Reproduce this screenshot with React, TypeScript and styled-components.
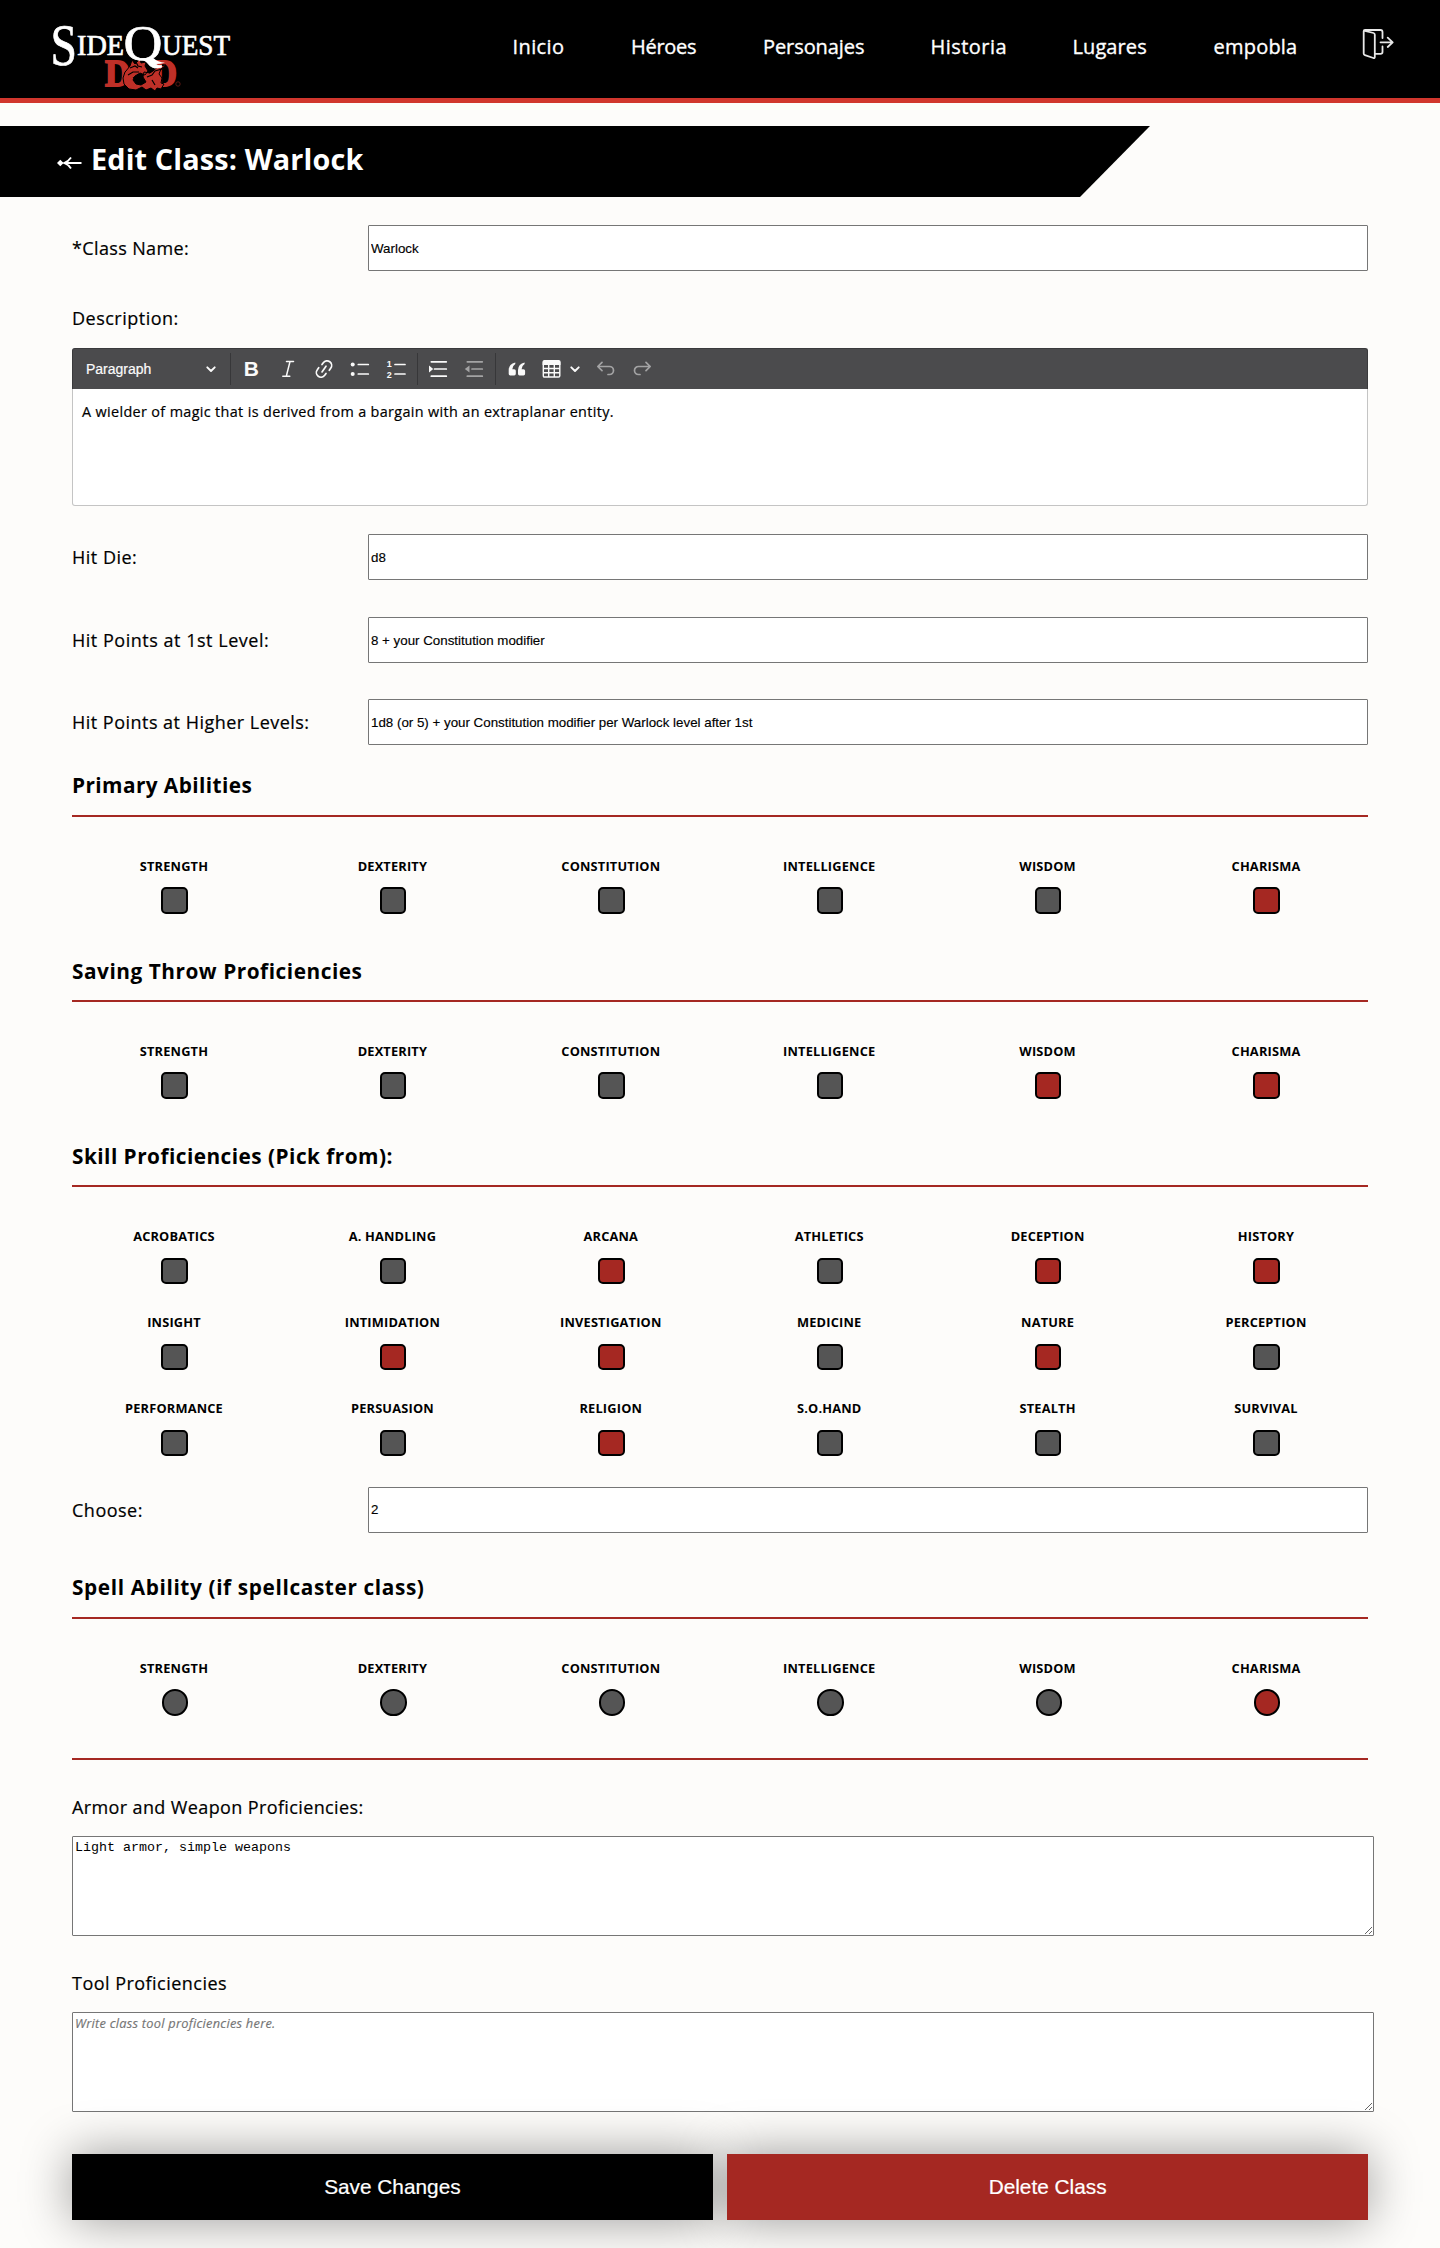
import React from "react";
import styled, { createGlobalStyle, css } from "styled-components";

const lucida = `"Lucida Grande", "Open Sans", "Noto Sans", sans-serif`;
const arial = `"Liberation Sans", Arial, sans-serif`;
const crimson = "#a52822";

const GlobalStyle = createGlobalStyle`
  * { box-sizing: border-box; }
  html, body { margin: 0; }
  body { background: #fdfcfa; color: #000; font-family: ${lucida}; }
  #root { overflow: hidden; }
`;

const Page = styled.div`
  height: 2248px;
  overflow: hidden;
`;

const Header = styled.header`
  display: flex;
  justify-content: space-between;
  align-items: flex-start;
  height: 103px;
  padding: 0 46px 0 40px;
  background: #000;
  border-bottom: 5px solid #d1362d;
`;

const LogoLink = styled.a`
  display: block;
  height: 98px;
`;

const Nav = styled.nav`
  display: flex;
  align-items: flex-start;
  padding-top: 28px;
`;

const NavLink = styled.a<{ $width: number; $spacing: number }>`
  width: ${(p) => p.$width}px;
  margin-top: 5px;
  color: #fff;
  font-size: 20px;
  font-weight: 500;
  line-height: 28px;
  letter-spacing: ${(p) => p.$spacing}px;
  white-space: nowrap;
  -webkit-text-stroke: 0.35px currentColor;
`;

const Banner = styled.div`
  display: flex;
  align-items: center;
  width: 1150px;
  height: 71px;
  margin-top: 23px;
  padding: 0 0 5px 57px;
  gap: 9px;
  background: #000;
  color: #fff;
  clip-path: polygon(0 0, 100% 0, calc(100% - 70px) 100%, 0 100%);
`;

const BannerTitle = styled.h1`
  margin: 0;
  font-size: 28.8px;
  font-weight: 700;
  line-height: 40px;
  letter-spacing: 0.15px;
`;

const BackArrow = styled.svg`
  margin-top: 8px;
`;

const Form = styled.form`
  display: flex;
  flex-direction: column;
  width: 1296px;
  margin: 28px auto 0;
`;

const FieldRow = styled.div<{ $gap: number }>`
  display: grid;
  grid-template-columns: 296px 1fr;
  align-items: center;
  height: 46px;
  margin-top: ${(p) => p.$gap}px;
`;

const Label = styled.label<{ $spacing?: number }>`
  font-size: 18px;
  line-height: 24px;
  letter-spacing: ${(p) => p.$spacing ?? 0.5}px;
  -webkit-text-stroke: 0.2px currentColor;
`;

const BlockLabel = styled(Label)<{ $top: number; $bottom: number }>`
  margin-top: ${(p) => p.$top}px;
  margin-bottom: ${(p) => p.$bottom}px;
`;

const TextInput = styled.input`
  width: 100%;
  height: 46px;
  padding: 1px 2px;
  border: 1px solid #767676;
  border-radius: 1px;
  background: #fff;
  color: #000;
  font: 13.333px ${arial};
  -webkit-text-stroke: 0.15px currentColor;
`;

const TextArea = styled.textarea`
  width: calc(100% + 6px);
  height: 100px;
  padding: 3px 2px 2px;
  border: 1px solid #767676;
  border-radius: 1px;
  background: #fff;
  color: #000;
  font: 13.333px "Liberation Mono", "Courier New", monospace;
  resize: both;
  &::placeholder {
    color: #757575;
    font: italic 12.8px/14px ${lucida};
    letter-spacing: 0.26px;
    -webkit-text-stroke: 0.15px currentColor;
  }
`;

const Editor = styled.div`
  height: 158px;
  border: 1px solid #c4c4c4;
  border-top: 0;
  border-radius: 3px;
  background: #fff;
`;

const Toolbar = styled.div`
  display: flex;
  align-items: center;
  height: 41px;
  margin: 0 -1px;
  border: 1px solid #3a3a3c;
  border-bottom: 0;
  border-radius: 3px 3px 0 0;
  background: #4b4b4d;
  color: #fafafa;
`;

const HeadingSelect = styled.button`
  display: flex;
  align-items: center;
  justify-content: space-between;
  width: 154px;
  height: 32px;
  padding: 0 11px 0 13px;
  border: 0;
  background: none;
  color: inherit;
  font: 14px ${arial};
  -webkit-text-stroke: 0.2px currentColor;
`;

const ToolSeparator = styled.span`
  width: 1px;
  height: 32px;
  margin: 0 2.6px 0 2.8px;
  background: #373739;
`;

const ToolButton = styled.button<{ $width?: number; $muted?: boolean }>`
  display: flex;
  align-items: center;
  justify-content: center;
  gap: 9px;
  width: ${(p) => p.$width ?? 36.1}px;
  height: 36px;
  padding: 0;
  border: 0;
  background: none;
  color: inherit;
  opacity: ${(p) => (p.$muted ? 0.5 : 1)};
`;

const BoldGlyph = styled.span`
  font: 700 21px/22px ${arial};
`;

const EditorContent = styled.p`
  margin: 0;
  padding: 12px 9px;
  font-size: 14.4px;
  line-height: 22px;
  letter-spacing: 0.35px;
  -webkit-text-stroke: 0.2px currentColor;
`;

const SectionHeading = styled.h2<{ $gap: number; $spacing: number; $line?: number }>`
  height: 47px;
  margin: ${(p) => p.$gap}px 0 0;
  border-bottom: 2px solid ${crimson};
  font-size: 20.8px;
  font-weight: 700;
  line-height: ${(p) => p.$line ?? 30}px;
  letter-spacing: ${(p) => p.$spacing}px;
`;

const Divider = styled.hr`
  width: 100%;
  height: 2px;
  margin: 42.2px 0 0;
  border: 0;
  background: ${crimson};
`;

const ChoiceGrid = styled.div`
  display: grid;
  grid-template-columns: repeat(6, 1fr);
  column-gap: 14.4px;
  row-gap: 29px;
  padding-top: 40px;
`;

const Choice = styled.label<{ $gap: number }>`
  display: flex;
  flex-direction: column;
  align-items: center;
  gap: ${(p) => p.$gap}px;
  font-size: 12.8px;
  font-weight: 700;
  line-height: 18px;
  letter-spacing: 0.18px;
`;

const Mark = styled.input<{ $round: boolean }>`
  appearance: none;
  width: 26.4px;
  height: 26.4px;
  margin: 0 0 0 ${(p) => (p.$round ? 2.4 : 1.2)}px;
  border: 2px solid #000;
  background: #555;
  ${(p) =>
    p.$round
      ? css`
          border-radius: 50%;
        `
      : css`
          border-radius: 5px;
        `}
  &:checked {
    background: ${crimson};
  }
`;

const Actions = styled.div`
  display: grid;
  grid-template-columns: 1fr 1fr;
  gap: 14.4px;
  margin-top: 42px;
`;

const ActionButton = styled.button<{ $danger?: boolean }>`
  height: 66px;
  padding: 0;
  border: 0;
  background: ${(p) => (p.$danger ? crimson : "#000")};
  color: #fff;
  font: 20.8px ${arial};
  -webkit-text-stroke: 0.2px currentColor;
  box-shadow: 0 0 50px rgba(0, 0, 0, 0.4);
`;

const Logo = () => (
  <svg width="204" height="98" viewBox="40 0 204 98" fontFamily='"Liberation Serif", serif' fill="#fff" stroke="#fff" strokeWidth="0.7">
    <g fill="#bf3028" stroke="#bf3028" strokeWidth="1.8" fontWeight="700">
      <text x="105" y="85.500" fontSize="38" textLength="25" lengthAdjust="spacingAndGlyphs">D</text>
      <text x="152" y="85.500" fontSize="38" textLength="25" lengthAdjust="spacingAndGlyphs">D</text>
    </g>
    <g>
      <path d="M126 71l4-5 2-6 3 4 5-5 1 4 5-1-1 4 3 5-3 4-5-2-5 3-2 4 3 4 5 1 5-3-3-5 1-5 6 1 4-3 5-4 7-1-5 4-2 5 3 4-1 5 3 1-3 5-4-1-2 3-4-3-5 2-4-3-6 3-7-1-5-5-1-6 2-6z" fill="#bf3028" stroke="#000" strokeWidth="1" />
      <path d="M130 68l5-2 3 2M136 62l2 4 4 1M128 75l5-3 6 0M133 78l4-2M147 77l5-2 3-4 7-2M152 80l3 5M149 73l5-3" fill="none" stroke="#000" strokeWidth="1.200" />
    </g>
    <circle cx="178" cy="84" r="2.200" fill="none" stroke="#6e1d18" strokeWidth="0.800" />
    <text x="50.500" y="65" fontSize="60" textLength="26.500" lengthAdjust="spacingAndGlyphs">S</text>
    <text x="77" y="55" fontSize="30" textLength="47" lengthAdjust="spacingAndGlyphs">IDE</text>
    <text x="123.500" y="59.500" fontSize="51" textLength="39" lengthAdjust="spacingAndGlyphs">Q</text>
    <path d="M141 58.500q6 5 13 5.500 6 .3 11-1.200-7-.3-12-5z" stroke="none" />
    <text x="162" y="55" fontSize="30" textLength="68" lengthAdjust="spacingAndGlyphs">UEST</text>
  </svg>
);

const ExitIcon = () => (
  <svg width="32" height="32" viewBox="0 0 32 32" fill="none" stroke="#e8e8e8" strokeWidth="1.8" strokeLinejoin="round" strokeLinecap="round">
    <path d="M2 2.600 11.500 5q1.300.4 1.300 1.800V29q0 1.300-1.400 1L2.900 27.200Q1.700 26.800 1.700 25.500V3.200Q1.700 2 3 2H18.500Q20.500 2 20.500 4v6M20.500 18.500V24q0 1.800-2 1.800h-5.200M18.500 14.300H30.500M25.700 9.600l5 4.700-5 4.700" />
  </svg>
);

interface ToolIconProps {
  width?: number;
  children: React.ReactNode;
}

const ToolIcon = ({ width = 20, children }: ToolIconProps) => (
  <svg width={width} height="20" viewBox={`0 0 ${width} 20`} fill="none" stroke="currentColor" strokeWidth="1.7" strokeLinecap="round" strokeLinejoin="round">
    {children}
  </svg>
);

const Chevron = () => (
  <ToolIcon width={10}>
    <path d="M1.300 8.300 5 12l3.700-3.700" strokeWidth="1.900" />
  </ToolIcon>
);

const EditorToolbar = () => (
  <Toolbar>
    <HeadingSelect type="button">
      Paragraph
      <Chevron />
    </HeadingSelect>
    <ToolSeparator />
    <ToolButton type="button"><BoldGlyph>B</BoldGlyph></ToolButton>
    <ToolButton type="button">
      <ToolIcon><path d="M8.500 2.600h7M4.800 17.200h7M12 2.600 8.300 17.200" strokeWidth="1.500" /></ToolIcon>
    </ToolButton>
    <ToolButton type="button">
      <ToolIcon>
        <path d="M4.700 8.700 3.300 10.700a4.600 4.600 0 0 0 7.400 5.600l1.300-1.900M15.300 11.300l1.400-2a4.600 4.600 0 0 0-7.400-5.600L8 5.600M12 7.200 8 12.900" />
      </ToolIcon>
    </ToolButton>
    <ToolButton type="button">
      <ToolIcon>
        <path d="M8.300 5.500h10M8.300 15h10" />
        <circle cx="2.700" cy="5.500" r="2" fill="currentColor" stroke="none" />
        <circle cx="2.700" cy="15" r="2" fill="currentColor" stroke="none" />
      </ToolIcon>
    </ToolButton>
    <ToolButton type="button">
      <ToolIcon>
        <path d="M9 5.500h10M9 15h10" />
        <g fill="currentColor" stroke="none" fontFamily='"Liberation Sans", sans-serif' fontSize="9" fontWeight="700">
          <text x="0.800" y="8.300">1</text>
          <text x="0.800" y="18.600">2</text>
        </g>
      </ToolIcon>
    </ToolButton>
    <ToolSeparator />
    <ToolButton type="button">
      <ToolIcon>
        <path d="M3.300 2.800h15M6.500 10h11.800M3.300 17.200h15" />
        <path d="M1 6.400v7.200L5.200 10z" fill="currentColor" stroke="none" />
      </ToolIcon>
    </ToolButton>
    <ToolButton type="button" $muted>
      <ToolIcon>
        <path d="M3.300 2.800h15M8 10h10.300M3.300 17.200h15" />
        <path d="M5.500 6.400v7.200L.8 10z" fill="currentColor" stroke="none" />
      </ToolIcon>
    </ToolButton>
    <ToolSeparator />
    <ToolButton type="button">
      <ToolIcon>
        <path d="M8.300 3.400Q2 4.500 1.700 11v3.800q0 1.600 1.500 1.600h4q1.600 0 1.600-1.600v-3q0-1.600-1.600-1.600H5.300Q5.500 6.700 8.300 5zM17.600 3.400Q11.300 4.500 11 11v3.800q0 1.600 1.500 1.600h4q1.600 0 1.600-1.600v-3q0-1.600-1.600-1.600h-1.900q.2-3.500 3-5.200z" fill="currentColor" stroke="none" />
      </ToolIcon>
    </ToolButton>
    <ToolButton type="button" $width={53}>
      <ToolIcon width={19}>
        <path d="M1.300 3.500h16.500v13.200q0 1.300-1.300 1.300h-14q-1.200 0-1.200-1.300zM1.300 9.500h16.500M1.300 13.800h16.500M6.700 5v13M12.300 5v13" strokeWidth="1.400" />
        <path d="M.6 6V2.600Q.6 1 2.200 1h14.700q1.600 0 1.600 1.600V6z" fill="currentColor" stroke="none" />
      </ToolIcon>
      <Chevron />
    </ToolButton>
    <ToolButton type="button" $muted>
      <ToolIcon><path d="M6 3.300 1.800 7.500 6 11.700M2.200 7.500h11.300a4 4 0 0 1 0 8H12" /></ToolIcon>
    </ToolButton>
    <ToolButton type="button" $muted>
      <ToolIcon><path d="M14 3.300l4.200 4.200-4.200 4.200M17.800 7.500H6.500a4 4 0 0 0 0 8H8" /></ToolIcon>
    </ToolButton>
  </Toolbar>
);

interface ChoicesProps {
  name: string;
  options: string[];
  selected: string[];
  round?: boolean;
  gap?: number;
}

const Choices = ({ name, options, selected, round = false, gap = 12.4 }: ChoicesProps) => (
  <ChoiceGrid>
    {options.map((option) => (
      <Choice key={option} $gap={gap}>
        {option}
        <Mark type={round ? "radio" : "checkbox"} name={name} defaultChecked={selected.includes(option)} $round={round} />
      </Choice>
    ))}
  </ChoiceGrid>
);

interface FieldProps {
  label: string;
  value: string;
  gap: number;
  spacing?: number;
}

const Field = ({ label, value, gap, spacing }: FieldProps) => (
  <FieldRow $gap={gap}>
    <Label $spacing={spacing}>{label}</Label>
    <TextInput defaultValue={value} />
  </FieldRow>
);

const links = [
  { text: "Inicio", width: 118.5, spacing: 0.4 },
  { text: "Héroes", width: 132, spacing: -0.28 },
  { text: "Personajes", width: 167.5, spacing: -0.08 },
  { text: "Historia", width: 142, spacing: 0.47 },
  { text: "Lugares", width: 141, spacing: 0.1 },
  { text: "empobla", width: 148.5, spacing: 0.22 },
];

const abilities = ["STRENGTH", "DEXTERITY", "CONSTITUTION", "INTELLIGENCE", "WISDOM", "CHARISMA"];

const skills = [
  "ACROBATICS", "A. HANDLING", "ARCANA", "ATHLETICS", "DECEPTION", "HISTORY",
  "INSIGHT", "INTIMIDATION", "INVESTIGATION", "MEDICINE", "NATURE", "PERCEPTION",
  "PERFORMANCE", "PERSUASION", "RELIGION", "S.O.HAND", "STEALTH", "SURVIVAL",
];

const warlockSkills = ["ARCANA", "DECEPTION", "HISTORY", "INTIMIDATION", "INVESTIGATION", "NATURE", "RELIGION"];

export default function App() {
  return (
    <Page>
      <GlobalStyle />
      <Header>
        <LogoLink><Logo /></LogoLink>
        <Nav>
          {links.map((link) => (
            <NavLink key={link.text} $width={link.width} $spacing={link.spacing}>{link.text}</NavLink>
          ))}
          <ExitIcon />
        </Nav>
      </Header>
      <Banner>
        <BackArrow width="25" height="14" viewBox="0 0 25 14" fill="none" stroke="#fff" strokeWidth="1.8">
          <path d="M7 7h17.500M14 1.500Q11.500 5.500 7 7q4.500 1.500 7 5.500" />
          <path d="M0 7l3.300-3.300L6.600 7l-3.300 3.300z" fill="#fff" stroke="none" />
        </BackArrow>
        <BannerTitle>Edit Class: Warlock</BannerTitle>
      </Banner>
      <Form>
        <Field label="*Class Name:" value="Warlock" gap={0} spacing={0.36} />
        <BlockLabel $top={35} $bottom={18}>Description:</BlockLabel>
        <Editor>
          <EditorToolbar />
          <EditorContent>A wielder of magic that is derived from a bargain with an extraplanar entity.</EditorContent>
        </Editor>
        <Field label="Hit Die:" value="d8" gap={28} />
        <Field label="Hit Points at 1st Level:" value="8 + your Constitution modifier" gap={37} spacing={0.52} />
        <Field label="Hit Points at Higher Levels:" value="1d8 (or 5) + your Constitution modifier per Warlock level after 1st" gap={36} spacing={0.48} />

        <SectionHeading $gap={25} $spacing={0.42}>Primary Abilities</SectionHeading>
        <Choices name="primary" options={abilities} selected={["CHARISMA"]} />

        <SectionHeading $gap={41.2} $spacing={0.53} $line={32}>Saving Throw Proficiencies</SectionHeading>
        <Choices name="saving" options={abilities} selected={["WISDOM", "CHARISMA"]} />

        <SectionHeading $gap={41.2} $spacing={0.47} $line={32}>Skill Proficiencies (Pick from):</SectionHeading>
        <Choices name="skills" options={skills} selected={warlockSkills} gap={12.6} />
        <Field label="Choose:" value="2" gap={31} />

        <SectionHeading $gap={39} $spacing={0.62}>Spell Ability (if spellcaster class)</SectionHeading>
        <Choices name="spell" options={abilities} selected={["CHARISMA"]} round />
        <Divider />

        <BlockLabel $top={35} $bottom={17} $spacing={0.38}>Armor and Weapon Proficiencies:</BlockLabel>
        <TextArea defaultValue="Light armor, simple weapons" />
        <BlockLabel $top={35} $bottom={17} $spacing={0.47}>Tool Proficiencies</BlockLabel>
        <TextArea placeholder="Write class tool proficiencies here." />

        <Actions>
          <ActionButton type="button">Save Changes</ActionButton>
          <ActionButton type="button" $danger>Delete Class</ActionButton>
        </Actions>
      </Form>
    </Page>
  );
}
